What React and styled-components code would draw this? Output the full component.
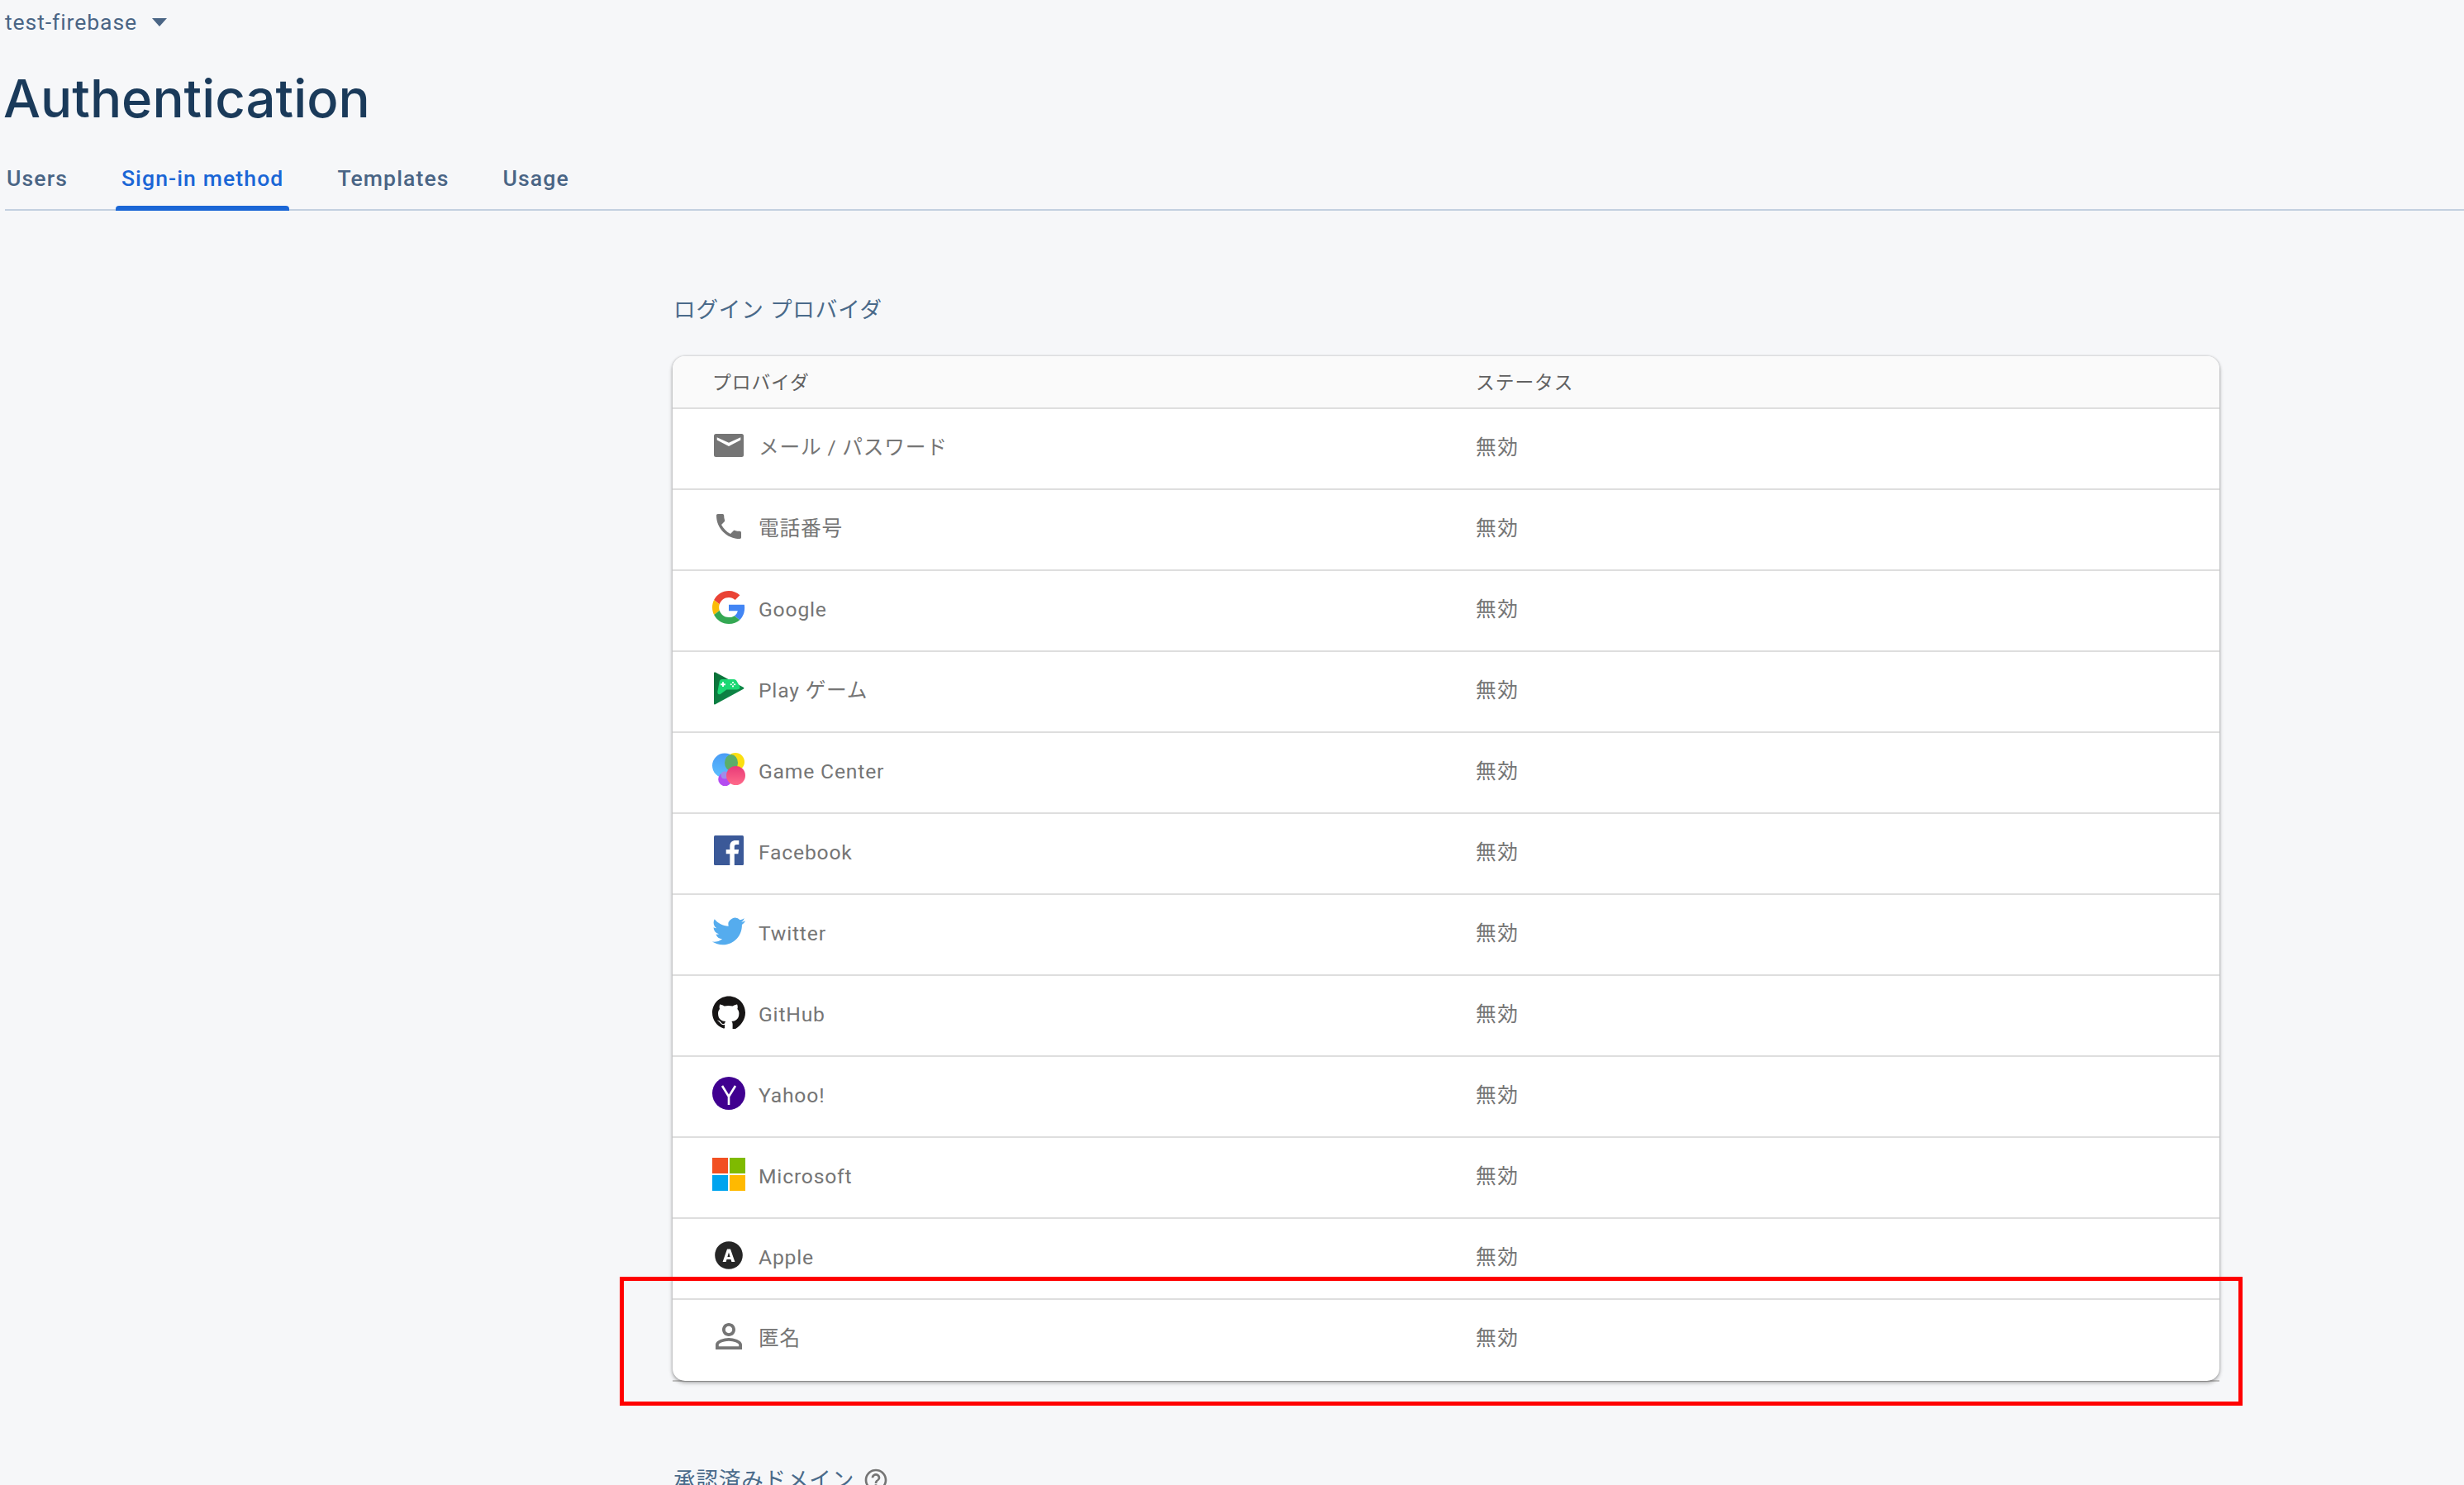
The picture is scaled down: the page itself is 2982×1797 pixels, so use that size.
import React from 'react';
import styled, { createGlobalStyle } from 'styled-components';

const Global = createGlobalStyle`
  html, body { margin: 0; padding: 0; height: 100%; overflow: hidden; background: #f6f7f9; }
  #root { height: 100%; }
  * { box-sizing: border-box; }
`;

const Page = styled.div`
  height: 1797px;
  overflow: hidden;
  background: #f6f7f9;
  font-family: Roboto, "Noto Sans CJK JP", sans-serif;
  -webkit-font-smoothing: antialiased;
`;
const Header = styled.header`
  padding: 7px 0 0 6px;
`;
const Breadcrumb = styled.div`
  display: flex;
  align-items: center;
  gap: 18px;
  height: 40px;
  font-size: 26.6px;
  letter-spacing: 0.9px;
  line-height: 40px;
  color: #4a6585;
`;
const Caret = styled.span`
  width: 0;
  height: 0;
  border-left: 9.5px solid transparent;
  border-right: 9.5px solid transparent;
  border-top: 10px solid #4a6585;
`;
const Title = styled.h1`
  margin: 33px 0 0 -2px;
  font-family: Inter, Roboto, sans-serif;
  font-size: 63.5px;
  font-weight: 450;
  letter-spacing: 0;
  line-height: 78px;
  color: #1a3a5a;
`;
const Tabs = styled.nav`
  display: flex;
  gap: 51px;
  margin-top: 25px;
  height: 72px;
  border-bottom: 2px solid #c3d0e0;
`;
const Tab = styled.a`
  position: relative;
  display: block;
  padding: 15px 7px 0;
  font-size: 26.6px;
  font-weight: 500;
  letter-spacing: 1.1px;
  line-height: 36px;
  color: ${p => (p.$active ? '#1a66d6' : '#4a6585')};
  &:first-child { margin-left: -5px; }
  &::after {
    content: '';
    display: ${p => (p.$active ? 'block' : 'none')};
    position: absolute;
    left: 0;
    right: 0;
    bottom: -2px;
    height: 6px;
    background: #1a66d6;
    border-radius: 4px 4px 0 0;
  }
`;
const Main = styled.main`
  margin-left: 814px;
  width: 1872px;
`;
const SectionTitle = styled.h2`
  display: flex;
  align-items: center;
  gap: 10px;
  margin: 100px 0 36px 1px;
  font-size: 26.6px;
  font-weight: 400;
  letter-spacing: 0.8px;
  line-height: 40px;
  color: #4a6a8a;
`;
const CardWrap = styled.div`
  position: relative;
  &::before {
    content: '';
    position: absolute;
    left: 0;
    right: 0;
    bottom: -1px;
    height: 2px;
    background: #c4c4c4;
  }
`;
const Card = styled.div`
  position: relative;
  background: #fff;
  border-radius: 15px;
  overflow: hidden;
  box-shadow: 0 2px 4px rgba(0, 0, 0, 0.25), 0 3px 6px rgba(0, 0, 0, 0.1), 0 0 3px rgba(0, 0, 0, 0.18);
`;
const HeadRow = styled.div`
  display: grid;
  grid-template-columns: 924px 1fr;
  height: 64px;
  padding: 17px 0 0 48px;
  background: #fafafa;
  border-bottom: 2px solid #dedede;
  font-size: 22.8px;
  letter-spacing: 0.9px;
  line-height: 32px;
  color: #616161;
`;
const Row = styled.div`
  display: grid;
  grid-template-columns: 924px 1fr;
  height: 98px;
  padding: 24px 0 0 48px;
  border-bottom: ${p => (p.$last ? 'none' : '2px solid #dedede')};
  font-size: 24.7px;
  letter-spacing: 0.8px;
  line-height: 40px;
  color: #757575;
`;
const Provider = styled.div`
  display: flex;
  gap: 16px;
`;
const IconBox = styled.span`
  display: flex;
  align-items: center;
  justify-content: center;
  width: 40px;
  height: 40px;
  flex: none;
  svg { display: block; flex: none; }
`;
const Label = styled.span`
  margin-top: 3px;
`;
const Status = styled.span`
  margin-top: 3px;
  letter-spacing: 1.6px;
`;
const Highlight = styled.div`
  position: absolute;
  left: -64px;
  right: -28px;
  top: 1114px;
  height: 156px;
  border: 5px solid #ff0000;
  pointer-events: none;
`;

const Mail = () => (
  <svg width="36" height="28" viewBox="0 0 36 28">
    <rect width="36" height="28" rx="2.5" fill="#757575" />
    <path d="M3.7 4.2 18 10.8 32.3 4.2v3.4L18 15 3.7 7.6z" fill="#fff" />
  </svg>
);
const Phone = () => (
  <svg width="40" height="40" viewBox="0 0 24 24" fill="#757575">
    <path d="M6.62 10.79c1.44 2.83 3.76 5.14 6.59 6.59l2.2-2.2c.27-.27.67-.36 1.02-.24 1.12.37 2.33.57 3.57.57.55 0 1 .45 1 1V20c0 .55-.45 1-1 1-9.39 0-17-7.61-17-17 0-.55.45-1 1-1h3.5c.55 0 1 .45 1 1 0 1.25.2 2.45.57 3.57.11.35.03.74-.25 1.02l-2.2 2.2z" />
  </svg>
);
const Google = () => (
  <svg width="40" height="40" viewBox="0 0 48 48">
    <path fill="#EA4335" d="M24 9.5c3.54 0 6.71 1.22 9.21 3.6l6.85-6.85C35.9 2.38 30.47 0 24 0 14.62 0 6.51 5.38 2.56 13.22l7.98 6.19C12.43 13.72 17.74 9.5 24 9.5z" />
    <path fill="#4285F4" d="M46.98 24.55c0-1.57-.15-3.09-.38-4.55H24v9.02h12.94c-.58 2.96-2.26 5.48-4.78 7.18l7.73 6c4.51-4.18 7.09-10.36 7.09-17.65z" />
    <path fill="#FBBC05" d="M10.53 28.59c-.48-1.45-.76-2.99-.76-4.59s.27-3.14.76-4.59l-7.98-6.19C.92 16.46 0 20.12 0 24c0 3.88.92 7.54 2.56 10.78l7.97-6.19z" />
    <path fill="#34A853" d="M24 48c6.48 0 11.93-2.13 15.89-5.81l-7.73-6c-2.15 1.45-4.92 2.3-8.16 2.3-6.26 0-11.57-4.22-13.47-9.91l-7.98 6.19C6.51 42.62 14.62 48 24 48z" />
  </svg>
);
const Play = () => (
  <svg width="40" height="40" viewBox="0 0 40 40">
    <defs>
      <linearGradient id="playBase" x1="0" y1="0" x2="1" y2="1">
        <stop offset="0" stopColor="#0b6f38" />
        <stop offset="1" stopColor="#0f8f4c" />
      </linearGradient>
    </defs>
    <path d="M2 1.5c0-1 .8-1.4 1.7-.9l34 18.2c1 .5 1 1.4 0 1.9L3.7 39.3c-.9.5-1.7.1-1.7-.9z" fill="url(#playBase)" />
    <path d="M12 9c-2 0-3 1-3.4 3L6.4 24c-.4 2.6 1.4 3.9 3.4 3l7.6-5.5h12c2.6 0 4.4-1 4.1-2.9-.2-1.3-.9-2-1.5-3.1l-2.1-3.8c-.8-1.8-2-2.7-3.7-2.7z" fill="#1cd873" />
    <path d="M13 12.3v5.8M10.1 15.2h5.8" stroke="#fff" strokeWidth="1.9" />
    <circle cx="25" cy="13" r="1.05" fill="#fff" />
    <circle cx="25" cy="17.4" r="1.05" fill="#fff" />
    <circle cx="22.8" cy="15.2" r="1.05" fill="#fff" />
    <circle cx="27.2" cy="15.2" r="1.05" fill="#fff" />
  </svg>
);
const GameCenter = () => (
  <svg width="40" height="40" viewBox="0 0 40 40">
    <defs>
      <linearGradient id="gcBlue" x1="0" y1="0" x2="0" y2="1">
        <stop offset="0" stopColor="#4a9cf5" />
        <stop offset="1" stopColor="#5cc0ff" />
      </linearGradient>
      <linearGradient id="gcPink" x1="0" y1="0" x2="0" y2="1">
        <stop offset="0" stopColor="#e83a78" />
        <stop offset="1" stopColor="#ff6a8a" />
      </linearGradient>
    </defs>
    <circle cx="28" cy="11" r="11" fill="#fbdf10" />
    <circle cx="15" cy="15.5" r="15" fill="url(#gcBlue)" />
    <ellipse cx="23" cy="12" rx="8" ry="10" fill="#5cae6a" />
    <circle cx="15.5" cy="32" r="8.3" fill="#b44cf0" />
    <circle cx="15" cy="27" r="4.6" fill="#a08ce8" />
    <circle cx="28.5" cy="27.5" r="11.5" fill="url(#gcPink)" />
  </svg>
);
const Facebook = () => (
  <svg width="36" height="36" viewBox="0 0 36 36">
    <rect width="36" height="36" rx="1.5" fill="#3b5998" />
    <path d="M24.8 36V22.2h4.6l.7-5.3h-5.3v-3.4c0-1.6.4-2.6 2.7-2.6h2.8V6.1c-.5-.1-2.2-.2-4.1-.2-4.1 0-6.9 2.5-6.9 7.1v3.9h-4.6v5.3h4.6V36z" fill="#fff" />
  </svg>
);
const Twitter = () => (
  <svg width="40" height="40" viewBox="0 0 24 24" fill="#55acee">
    <path d="M23.953 4.57a10 10 0 01-2.825.775 4.958 4.958 0 002.163-2.723c-.951.555-2.005.959-3.127 1.184a4.92 4.92 0 00-8.384 4.482C7.69 8.095 4.067 6.13 1.64 3.162a4.822 4.822 0 00-.666 2.475c0 1.71.87 3.213 2.188 4.096a4.904 4.904 0 01-2.228-.616v.06a4.923 4.923 0 003.946 4.827 4.996 4.996 0 01-2.212.085 4.936 4.936 0 004.604 3.417 9.867 9.867 0 01-6.102 2.105c-.39 0-.779-.023-1.17-.067a13.995 13.995 0 007.557 2.209c9.053 0 13.998-7.496 13.998-13.985 0-.21 0-.42-.015-.63A9.935 9.935 0 0024 4.59z" />
  </svg>
);
const GitHub = () => (
  <svg width="40" height="40" viewBox="0 0 24 24" fill="#171515">
    <path d="M12 .297c-6.63 0-12 5.373-12 12 0 5.303 3.438 9.8 8.205 11.385.6.113.82-.258.82-.577 0-.285-.01-1.04-.015-2.04-1.6.3-2.6-.3-3.2-1.2-1-1.6-2.3-2-2.3-2 1.1-.3 2.4.6 3 1.6.6.9 1.6 1.1 2.5.7.1-.7.4-1.2.7-1.5-2.7-.3-5.5-1.3-5.5-5.9 0-1.3.5-2.4 1.2-3.2-.1-.3-.5-1.5.1-3.2 0 0 1 0 3.3 1.2.96-.27 1.98-.4 3-.4 1.02 0 2.04.13 3 .4 2.28-1.2 3.28-1.2 3.28-1.2.65 1.7.24 2.9.12 3.2.77.84 1.23 1.9 1.23 3.2 0 4.6-2.8 5.6-5.47 5.9.42.36.81 1.1.81 2.2 0 1.6-.015 2.9-.015 3.3 0 .3.21.7.825.57C20.565 22.092 24 17.592 24 12.297c0-6.627-5.373-12-12-12" />
  </svg>
);
const Yahoo = () => (
  <svg width="40" height="40" viewBox="0 0 40 40">
    <circle cx="20" cy="20" r="20" fill="#400090" />
    <path d="M12 11l8 13 8-13M20 24v10" fill="none" stroke="#fff" strokeWidth="2.6" />
  </svg>
);
const Microsoft = () => (
  <svg width="40" height="40" viewBox="0 0 40 40">
    <rect width="19" height="19" fill="#f25022" />
    <rect x="21" width="19" height="19" fill="#7fba00" />
    <rect y="21" width="19" height="19" fill="#00a4ef" />
    <rect x="21" y="21" width="19" height="19" fill="#ffb900" />
  </svg>
);
const Apple = () => (
  <svg width="34" height="34" viewBox="0 0 34 34">
    <circle cx="17" cy="17" r="16.8" fill="#262626" />
    <path d="M9.6 25 15 9.5h4L24.4 25h-4l-.9-3h-5l-.9 3zM15.4 19h3.2L17 13.6z" fill="#fff" fillRule="evenodd" />
  </svg>
);
const Person = () => (
  <svg width="48" height="48" viewBox="0 0 24 24" fill="#757575">
    <path d="M12 5.9c1.16 0 2.1.94 2.1 2.1s-.94 2.1-2.1 2.1S9.9 9.16 9.9 8s.94-2.1 2.1-2.1m0 9c2.97 0 6.1 1.46 6.1 2.1v1.1H5.9V17c0-.64 3.13-2.1 6.1-2.1M12 4C9.79 4 8 5.79 8 8s1.79 4 4 4 4-1.79 4-4-1.79-4-4-4zm0 9c-2.67 0-8 1.34-8 4v3h16v-3c0-2.66-5.33-4-8-4z" />
  </svg>
);
const Help = () => (
  <svg width="32" height="32" viewBox="0 0 24 24" fill="#757575">
    <path d="M11 18h2v-2h-2v2zm1-16C6.48 2 2 6.48 2 12s4.48 10 10 10 10-4.48 10-10S17.52 2 12 2zm0 18c-4.41 0-8-3.59-8-8s3.59-8 8-8 8 3.59 8 8-3.59 8-8 8zm0-14c-2.21 0-4 1.79-4 4h2c0-1.1.9-2 2-2s2 .9 2 2c0 2-3 1.75-3 5h2c0-2.25 3-2.5 3-5 0-2.21-1.79-4-4-4z" />
  </svg>
);

const providers = [
  ['メール / パスワード', Mail],
  ['電話番号', Phone],
  ['Google', Google],
  ['Play ゲーム', Play],
  ['Game Center', GameCenter],
  ['Facebook', Facebook],
  ['Twitter', Twitter],
  ['GitHub', GitHub],
  ['Yahoo!', Yahoo],
  ['Microsoft', Microsoft],
  ['Apple', Apple],
  ['匿名', Person],
];

export default function App() {
  return (
    <Page>
      <Global />
      <Header>
        <Breadcrumb>test-firebase<Caret /></Breadcrumb>
        <Title>Authentication</Title>
        <Tabs>
          <Tab>Users</Tab>
          <Tab $active>Sign-in method</Tab>
          <Tab>Templates</Tab>
          <Tab>Usage</Tab>
        </Tabs>
      </Header>
      <Main>
        <SectionTitle>ログイン プロバイダ</SectionTitle>
        <CardWrap>
          <Card>
            <HeadRow><span>プロバイダ</span><span>ステータス</span></HeadRow>
            {providers.map(([name, Icon], i) => (
              <Row key={name} $last={i === providers.length - 1}>
                <Provider>
                  <IconBox><Icon /></IconBox>
                  <Label>{name}</Label>
                </Provider>
                <Status>無効</Status>
              </Row>
            ))}
          </Card>
          <Highlight />
        </CardWrap>
        <SectionTitle>承認済みドメイン<Help /></SectionTitle>
      </Main>
    </Page>
  );
}
